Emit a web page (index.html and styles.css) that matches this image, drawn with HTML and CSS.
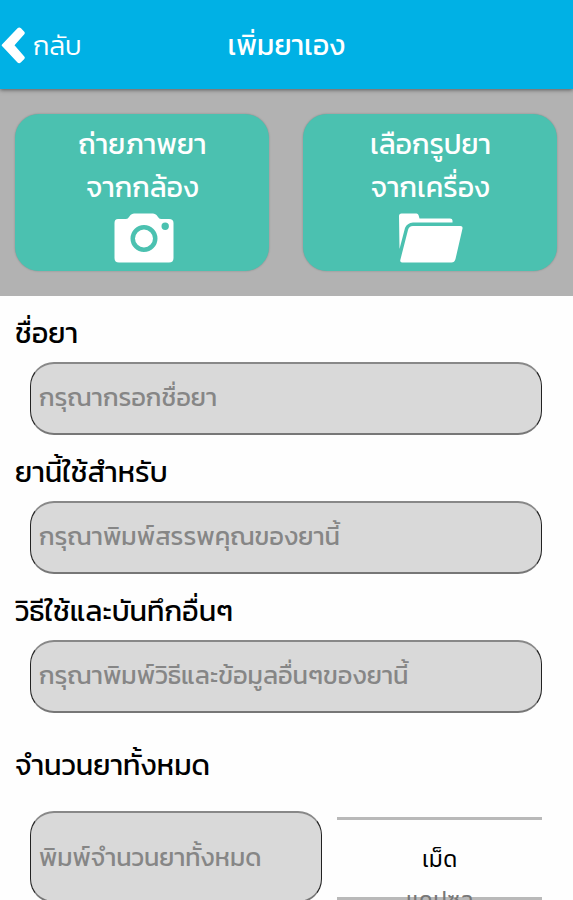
FILE: index.html
```
<!DOCTYPE html>
<html lang="th">
<head>
<meta charset="utf-8">
<title>เพิ่มยาเอง</title>
<link rel="stylesheet" href="styles.css">
</head>
<body>
<header class="bar">
  <a class="back">
    <svg class="back-icon" width="26" height="38" viewBox="0 0 26 38"><path d="M2 18.500Q1.200 19 2 20L17.500 36.500Q19.200 38 21 36.300L24.300 33Q25.500 31.800 24.300 30.600L14.500 19.200L24.300 8.300Q25.500 7 24.300 5.800L21 2.300Q19.200 .7 17.500 2.300Z" fill="#fff"/></svg>
    <span>กลับ</span>
  </a>
  <h1 class="title">เพิ่มยาเอง</h1>
</header>
<section class="photo">
  <button class="card">
    <span class="card-text">ถ่ายภาพยา</span>
    <span class="card-text">จากกล้อง</span>
    <svg class="card-icon camera" width="60" height="50" viewBox="0 0 60 50"><path fill="#fff" fill-rule="evenodd" d="M4 6H12Q14 6 15 4L16.500 2Q18 .5 20 .5H39Q41 .5 42.500 2L44 4Q45 6 47 6H55Q59.500 6 59.500 10V45Q59.500 49.500 55 49.500H5Q.5 49.500 .5 45V10Q.5 6 4 6ZM30 12A13.500 13.500 0 1 0 30 39A13.500 13.500 0 1 0 30 12ZM30 16.500A9 9 0 1 1 30 34.500A9 9 0 1 1 30 16.500ZM51.200 9.500A3.700 3.700 0 1 0 51.200 16.900A3.700 3.700 0 1 0 51.200 9.500Z"/></svg>
  </button>
  <button class="card">
    <span class="card-text">เลือกรูปยา</span>
    <span class="card-text">จากเครื่อง</span>
    <svg class="card-icon folder" width="64" height="50" viewBox="0 0 64 50"><path fill="#fff" d="M0 3Q0 .5 2.500 .5H17.500Q19 .5 19.500 2L20.500 5.500H51Q53.500 5.500 53.500 7.500V9.500H14Q8 10 6 15L.5 36Z"/><path fill="#fff" d="M14 13H61.500Q64 13 63.500 15.500L56.500 46Q55.500 49.500 52.500 49.500H3Q.8 49.500 1.300 47L9 17Q10 13 14 13Z"/></svg>
  </button>
</section>
<main class="form">
  <div class="field">
    <label class="label" for="name">ชื่อยา</label>
    <input class="input" id="name" placeholder="กรุณากรอกชื่อยา">
  </div>
  <div class="field">
    <label class="label" for="usage">ยานี้ใช้สำหรับ</label>
    <input class="input" id="usage" placeholder="กรุณาพิมพ์สรรพคุณของยานี้">
  </div>
  <div class="field">
    <label class="label" for="note">วิธีใช้และบันทึกอื่นๆ</label>
    <input class="input" id="note" placeholder="กรุณาพิมพ์วิธีและข้อมูลอื่นๆของยานี้">
  </div>
  <div class="amount">
    <label class="label" for="total">จำนวนยาทั้งหมด</label>
    <div class="amount-row">
      <input class="input input-tall" id="total" placeholder="พิมพ์จำนวนยาทั้งหมด">
      <div class="picker">
        <div class="option selected">เม็ด</div>
        <div class="option next">แคปซูล</div>
      </div>
    </div>
  </div>
</main>
</body>
</html>
```
FILE: styles.css
```
* { box-sizing: border-box; }
html { overflow: hidden; }
body {
  margin: 0;
  height: 900px;
  overflow: hidden;
  background: #fefefe;
  color: #000;
  font-family: Kanit, "Noto Sans Thai", "Noto Sans", sans-serif;
}
.bar {
  position: relative;
  height: 89px;
  display: grid;
  grid-template-columns: 1fr auto 1fr;
  align-items: center;
  background: #00b1e5;
  color: #fff;
  box-shadow: 0 1px 4px rgba(0, 0, 0, .5);
}
.back {
  display: flex;
  align-items: center;
  gap: 7px;
  font-size: 26.8px;
  font-weight: 300;
  line-height: 42px;
}
.back span { padding-top: 2px; }
.title {
  margin: 0;
  font-size: 28.6px;
  font-weight: 400;
  line-height: 42px;
}
.photo {
  height: 207px;
  padding: 25px 16px 25px 15px;
  display: grid;
  grid-template-columns: 1fr 1fr;
  gap: 34px;
  background: #b2b2b2;
}
.card {
  display: flex;
  flex-direction: column;
  align-items: center;
  padding: 9px 0 0;
  border: 0;
  border-radius: 24px;
  background: #4bc1b0;
  color: #fff;
  font-family: inherit;
  font-size: 28.5px;
  font-weight: 400;
  box-shadow: 0 0 2px rgba(0, 0, 0, .25);
}
.card-text { padding-left: 1px; line-height: 43px; }
.card-icon { margin-top: 4px; }
.camera { margin-left: 4px; }
.folder { margin-left: 2px; }
.form { padding: 15px 0 0 15px; }
.field { height: 139px; }
.label {
  display: block;
  height: 51px;
  font-size: 28.8px;
  line-height: 44px;
}
.input {
  display: block;
  width: 512px;
  height: 73px;
  margin-left: 15px;
  padding: 0 8px 3px;
  border: 1px solid #222;
  border-top: 2px solid #888;
  border-bottom: 2px solid #777;
  border-radius: 24px;
  background: #d9d9d9;
  font: 400 25.4px Kanit, "Noto Sans Thai", "Noto Sans", sans-serif;
}
.input::placeholder { color: #868686; opacity: 1; }
.amount { padding-top: 15px; }
.amount-row {
  display: flex;
  padding-top: 17px;
  gap: 15px;
}
.input-tall {
  flex: none;
  width: 292px;
  height: 92px;
  padding-bottom: 0;
  font-size: 25.2px;
}
.picker {
  width: 205px;
  margin-top: 6px;
  height: 83px;
  border-top: 3px solid #b9b9b9;
  border-bottom: 3px solid #b9b9b9;
  text-align: center;
  font-family: Roboto, "Noto Sans Thai", "Noto Sans", sans-serif;
}
.option { font-size: 23.5px; line-height: 40px; }
.selected { padding-top: 19px; }
.next { padding-top: 1px; color: #777; }
```
